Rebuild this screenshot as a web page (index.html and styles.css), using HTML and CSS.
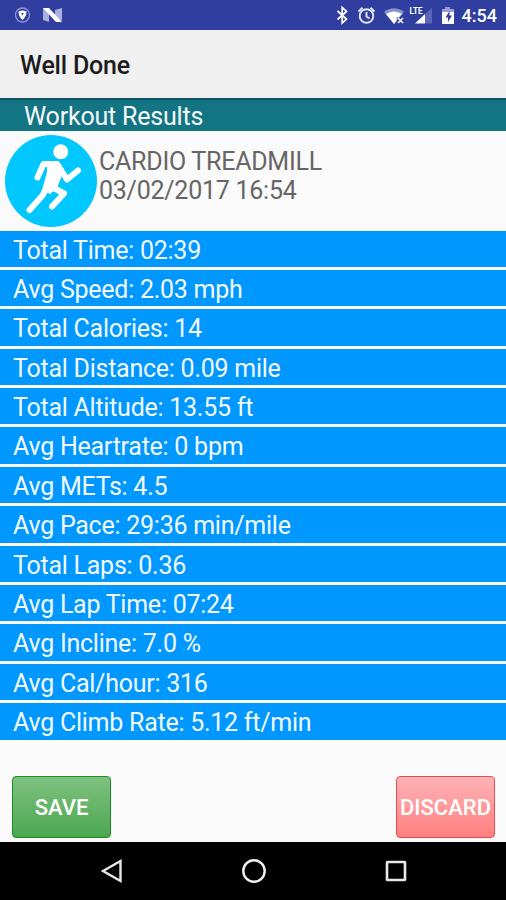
FILE: index.html
```html
<!DOCTYPE html>
<html lang="en">
<head>
  <meta charset="UTF-8" />
  <meta name="viewport" content="width=device-width, initial-scale=1.0"/>
  <title>Well Done</title>
  <link rel="stylesheet" href="styles.css">
</head>
<body>
  <div class="status-bar">
    <svg class="notifications" width="50" height="30" viewBox="0 0 50 30">
      <circle cx="8.5" cy="15" r="7" fill="none" stroke="#8f97d2" stroke-width="1.3"/>
      <path d="M4.5 11.5Q8.5 9.5 12.5 11.5Q12.5 17 8.5 20Q4.5 17 4.5 11.5z" fill="#fff"/>
      <path d="M7.2 13h2.6l-1.300 2.500z" fill="#303f9f"/>
      <path d="M29 8l6 4v10l-6-2zM41 10l7-2v13l-7-4z" fill="#a9afe0"/>
      <path d="M29 8h6l13 14h-6z" fill="#fff"/>
    </svg>
    <svg class="system" width="120" height="30" viewBox="336 0 120 30">
      <path d="M337.500 11l9 8-4.300 4V7.500l4.300 4-9 8" fill="none" stroke="#fff" stroke-width="1.700"/>
      <g fill="none" stroke="#e6e8f7" stroke-width="1.900">
        <circle cx="366.500" cy="16" r="6.800"/>
        <path d="M366.500 12v4.500l3 2M358.500 11.500l4-3.700M374.500 11.500l-4-3.700"/>
      </g>
      <path d="M384 12Q394 4.500 404 12L394 24z" fill="#8991cf"/>
      <path d="M386 14Q394 9 402 14L399 17H396.500V21L394 24z" fill="#fff"/>
      <path d="M398 18l5 5M403 18l-5 5" stroke="#fff" stroke-width="1.500"/>
      <path d="M432 8v15.500h-7V14z" fill="#5b67b6"/>
      <path d="M415 23.500l10-9.500v9.500z" fill="#fff"/>
      <text x="409.500" y="14" class="lte" textLength="13" lengthAdjust="spacingAndGlyphs">LTE</text>
      <path d="M442 9h3V7h5v2h4v5h-12z" fill="#969dd5"/>
      <path d="M442 12h12v12h-12z" fill="#fff"/>
      <path d="M449.500 11l-4 6.500h2.500v4.500l4-6.500h-2.500z" fill="#303f9f"/>
    </svg>
    <span class="clock">4:54</span>
  </div>

  <h1>Well Done</h1>
  <h2>Workout Results</h2>

  <div class="workout">
    <svg width="94" height="94" viewBox="0 0 94 94">
      <circle cx="47" cy="47" r="46" fill="#00c8ff"/>
      <circle cx="56.700" cy="17.700" r="7.500" fill="#fff"/>
      <path d="M43 27H54L60 36L53 54L46 60L38 56L43 38z" fill="#fff"/>
      <g fill="none" stroke="#fff" stroke-width="6" stroke-linecap="round" stroke-linejoin="round">
        <path d="M48 30H39.500L33.500 43.500"/>
        <path d="M53.500 30.500L63 45.500L74 36.500"/>
        <path d="M43 53L38.500 61.500L25.500 76"/>
        <path d="M48 53L60 59.500L48 72.500"/>
      </g>
    </svg>
    <div class="info">
      <div>CARDIO TREADMILL</div>
      <div>03/02/2017 16:54</div>
    </div>
  </div>

  <ul class="results">
    <li>Total Time: 02:39</li>
    <li>Avg Speed: 2.03 mph</li>
    <li>Total Calories: 14</li>
    <li>Total Distance: 0.09 mile</li>
    <li>Total Altitude: 13.55 ft</li>
    <li>Avg Heartrate: 0 bpm</li>
    <li>Avg METs: 4.5</li>
    <li>Avg Pace: 29:36 min/mile</li>
    <li>Total Laps: 0.36</li>
    <li>Avg Lap Time: 07:24</li>
    <li>Avg Incline: 7.0 %</li>
    <li>Avg Cal/hour: 316</li>
    <li>Avg Climb Rate: 5.12 ft/min</li>
  </ul>

  <div class="actions">
    <button class="save">SAVE</button>
    <button class="discard">DISCARD</button>
  </div>

  <div class="nav-bar">
    <svg width="24" height="26" viewBox="0 0 24 26"><path d="M3 13L20.500 3V23z" fill="none" stroke="#e8e8e8" stroke-width="2.400"/></svg>
    <svg width="26" height="26" viewBox="0 0 26 26"><circle cx="13" cy="13" r="10.700" fill="none" stroke="#f0f0f0" stroke-width="2.400"/></svg>
    <svg width="24" height="26" viewBox="0 0 24 26"><rect x="3" y="4" width="18" height="18" rx="0.500" fill="none" stroke="#e8e8e8" stroke-width="2.600"/></svg>
  </div>
</body>
</html>
```

FILE: styles.css
```css
body {
  margin: 0;
  height: 900px;
  display: flex;
  flex-direction: column;
  overflow: hidden;
  font-family: Roboto, sans-serif;
  background: #fafafa;
}
.status-bar {
  display: flex;
  height: 30px;
  padding: 0 9px 0 14px;
  background: #303f9f;
  color: #fff;
}
.system {
  margin-left: auto;
}
.lte {
  font-size: 9.5px;
  font-weight: bold;
  fill: #fff;
}
.clock {
  margin-left: 6px;
  font-size: 18px;
  font-weight: 500;
  line-height: 32px;
}
h1 {
  margin: 0;
  height: 68px;
  padding-left: 20px;
  background: #f0f0f0;
  color: #1c1c1c;
  font-size: 25px;
  font-weight: 500;
  letter-spacing: -0.2px;
  line-height: 71px;
}
h2 {
  box-sizing: border-box;
  margin: 0;
  height: 33px;
  padding-left: 24px;
  border-top: 2px solid #0c5265;
  background: #137483;
  color: #f5f9fa;
  font-size: 25px;
  font-weight: 400;
  letter-spacing: -0.2px;
  line-height: 33px;
}
.workout {
  display: flex;
  height: 96.5px;
  padding: 3px 0 0 4px;
}
.info {
  padding: 13px 0 0 1px;
  color: #666;
  font-size: 25px;
  letter-spacing: -0.25px;
  line-height: 29px;
}
.results {
  margin: 0;
  padding: 0;
  list-style: none;
}
.results li {
  height: 36.4px;
  margin-bottom: 3px;
  padding-left: 13px;
  background: #0097ff;
  color: #f2faff;
  font-size: 25px;
  letter-spacing: -0.25px;
  line-height: 40px;
}
.actions {
  display: flex;
  justify-content: space-between;
  margin-top: 33px;
  padding: 0 11px 0 12px;
}
button {
  width: 99px;
  height: 62px;
  padding: 2px 0 0;
  border: 1.5px solid;
  border-radius: 4px;
  color: #fff;
  font-family: inherit;
  font-size: 22px;
  font-weight: 500;
  white-space: nowrap;
}
.save {
  border-color: #1b8c22;
  background: linear-gradient(#7fc180, #4ca750);
}
.discard {
  border-color: #e84b50;
  background: linear-gradient(#ffb3b8, #ff7f80);
}
.nav-bar {
  display: flex;
  justify-content: space-between;
  align-items: center;
  height: 58px;
  margin-top: auto;
  padding: 0 98px 0 100px;
  background: #000;
}
```
